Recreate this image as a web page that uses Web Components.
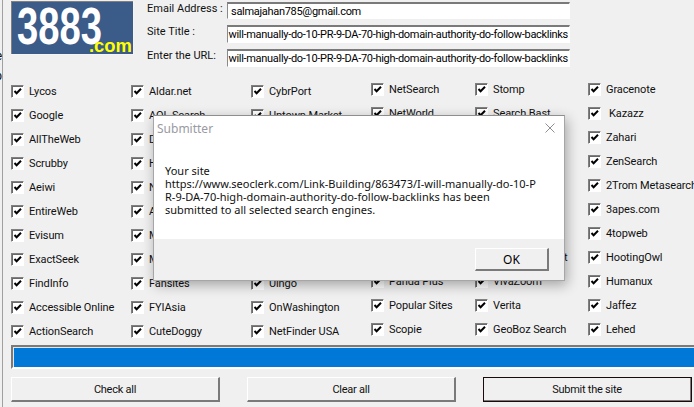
<!DOCTYPE html>
<html>
<head>
<meta charset="utf-8">
<title>Submitter</title>
<style>
html, body {
    margin: 0;
    padding: 0;
    width: 694px;
    height: 407px;
    overflow: hidden;
    background: #f0f0f0;
}
body {
    font: 11px Roboto, "Liberation Sans", Arial, sans-serif;
    color: #000;
}
</style>
</head>
<body>
<submit-app>
    <logo-box slot="logo"></logo-box>
    <field-row slot="fields" label="Email Address :" value="salmajahan785@gmail.com" height="17"></field-row>
    <field-row slot="fields" label="Site Title :" value="will-manually-do-10-PR-9-DA-70-high-domain-authority-do-follow-backlinks" end></field-row>
    <field-row slot="fields" label="Enter the URL:" value="will-manually-do-10-PR-9-DA-70-high-domain-authority-do-follow-backlinks" end></field-row>

    <check-column slot="checks" offset="3">
        <check-item>Lycos</check-item>
        <check-item>Google</check-item>
        <check-item>AllTheWeb</check-item>
        <check-item>Scrubby</check-item>
        <check-item>Aeiwi</check-item>
        <check-item>EntireWeb</check-item>
        <check-item>Evisum</check-item>
        <check-item>ExactSeek</check-item>
        <check-item>FindInfo</check-item>
        <check-item>Accessible Online</check-item>
        <check-item>ActionSearch</check-item>
    </check-column>
    <check-column slot="checks" offset="3">
        <check-item>Aldar.net</check-item>
        <check-item>AOL Search</check-item>
        <check-item>D</check-item>
        <check-item>H</check-item>
        <check-item>N</check-item>
        <check-item>A</check-item>
        <check-item>M</check-item>
        <check-item>M</check-item>
        <check-item>Fansites</check-item>
        <check-item>FYIAsia</check-item>
        <check-item>CuteDoggy</check-item>
    </check-column>
    <check-column slot="checks" offset="3">
        <check-item>CybrPort</check-item>
        <check-item>Uptown Market</check-item>
        <check-item></check-item>
        <check-item></check-item>
        <check-item></check-item>
        <check-item></check-item>
        <check-item></check-item>
        <check-item></check-item>
        <check-item>Uingo</check-item>
        <check-item>OnWashington</check-item>
        <check-item>NetFinder USA</check-item>
    </check-column>
    <check-column slot="checks" offset="1">
        <check-item>NetSearch</check-item>
        <check-item>NetWorld</check-item>
        <check-item></check-item>
        <check-item></check-item>
        <check-item></check-item>
        <check-item></check-item>
        <check-item></check-item>
        <check-item></check-item>
        <check-item>Panda Plus</check-item>
        <check-item>Popular Sites</check-item>
        <check-item>Scopie</check-item>
    </check-column>
    <check-column slot="checks" offset="1">
        <check-item>Stomp</check-item>
        <check-item>Search Bast</check-item>
        <check-item></check-item>
        <check-item></check-item>
        <check-item></check-item>
        <check-item></check-item>
        <check-item></check-item>
        <check-item indent="71">t</check-item>
        <check-item>VivaZoom</check-item>
        <check-item>Verita</check-item>
        <check-item>GeoBoz Search</check-item>
    </check-column>
    <check-column slot="checks" offset="1">
        <check-item>Gracenote</check-item>
        <check-item indent="3">Kazazz</check-item>
        <check-item>Zahari</check-item>
        <check-item>ZenSearch</check-item>
        <check-item>2Trom Metasearch</check-item>
        <check-item>3apes.com</check-item>
        <check-item>4topweb</check-item>
        <check-item>HootingOwl</check-item>
        <check-item>Humanux</check-item>
        <check-item>Jaffez</check-item>
        <check-item>Lehed</check-item>
    </check-column>

    <progress-strip slot="progress"></progress-strip>

    <win-button slot="buttons">Check all</win-button>
    <win-button slot="buttons">Clear all</win-button>
    <win-button slot="buttons" default>Submit the site</win-button>

    <msg-dialog slot="dialog" heading="Submitter">
        Your site<br>
        https://www.seoclerk.com/Link-Building/863473/I-will-manually-do-10-P<br>
        R-9-DA-70-high-domain-authority-do-follow-backlinks has been<br>
        submitted to all selected search engines.
    </msg-dialog>
</submit-app>

<script>
class SubmitApp extends HTMLElement {
    constructor() {
        super();
        this.shadowDOM = this.attachShadow({mode: "open"});
        this.shadowDOM.innerHTML = `
        <style>
        :host {
            display: flex;
            position: relative;
            width: 694px;
            height: 407px;
            overflow: hidden;
        }
        .behind {
            flex: none;
            width: 2px;
            overflow: hidden;
            font-size: 12px;
            line-height: 20px;
            padding-top: 46px;
            direction: rtl;
        }
        .main {
            flex: none;
            width: 692px;
            border-left: 1px solid #a0a0a0;
            box-sizing: border-box;
        }
        header {
            display: flex;
            height: 76px;
            padding: 1px 0 0 8px;
            box-sizing: border-box;
        }
        .fields {
            display: flex;
            flex-direction: column;
            gap: 6px;
            margin: 1px 0 0 13px;
        }
        .checks {
            display: grid;
            grid-template-columns: 120px 120px 120px 104px 113px 1fr;
            margin-left: 8px;
            height: 266px;
        }
        .progress {
            margin: 3px 0 0 8px;
        }
        .buttons {
            display: flex;
            gap: 27px;
            margin: 8px 0 0 8px;
        }
        </style>
        <div class="behind">e<br>p</div>
        <div class="main">
            <header>
                <slot name="logo"></slot>
                <div class="fields"><slot name="fields"></slot></div>
            </header>
            <div class="checks"><slot name="checks"></slot></div>
            <div class="progress"><slot name="progress"></slot></div>
            <div class="buttons"><slot name="buttons"></slot></div>
        </div>
        <slot name="dialog"></slot>`;
    }
}
customElements.define("submit-app", SubmitApp);

class LogoBox extends HTMLElement {
    constructor() {
        super();
        this.shadowDOM = this.attachShadow({mode: "open"});
        this.shadowDOM.innerHTML = `
        <style>
        :host {
            display: block;
            flex: none;
            width: 123px;
            height: 54px;
        }
        svg { display: block; }
        text { font-family: "Liberation Sans", Arial, sans-serif; font-weight: bold; }
        </style>
        <svg width="123" height="54" viewBox="0 0 123 54">
            <rect width="123" height="54" fill="#f4f4f4"/>
            <rect x="0" y="0" width="122" height="53" fill="#808080"/>
            <rect x="1" y="1" width="121" height="52" fill="#3b5b88"/>
            <text x="6" y="43" font-size="51" fill="#fff" textLength="85" lengthAdjust="spacingAndGlyphs">3883</text>
            <text x="78" y="51" font-size="19" fill="#ffff00" textLength="43" lengthAdjust="spacingAndGlyphs">.com</text>
        </svg>`;
    }
}
customElements.define("logo-box", LogoBox);

class FieldRow extends HTMLElement {
    constructor() {
        super();
        this.shadowDOM = this.attachShadow({mode: "open"});
    }

    connectedCallback() {
        const end = this.hasAttribute("end");
        const height = this.getAttribute("height") || 18;
        this.shadowDOM.innerHTML = `
        <style>
        :host {
            display: flex;
            align-items: flex-start;
            height: ${height}px;
            font-size: 11px;
        }
        label {
            width: 80px;
            flex: none;
            line-height: 14px;
            color: #111;
            white-space: nowrap;
        }
        .input {
            display: flex;
            justify-content: ${end ? "flex-end" : "flex-start"};
            align-items: center;
            width: 343px;
            height: ${height}px;
            box-sizing: border-box;
            padding: 0 1px 0 3px;
            overflow: hidden;
            white-space: nowrap;
            background: #fff;
            border-top: 2px solid #7a7a7a;
            border-left: 1px solid #8a8a8a;
            border-right: 1px solid #fff;
            border-bottom: 1px solid #fff;
            color: #000;
            letter-spacing: -0.3px;
        }
        span { flex: none; }
        </style>
        <label>${this.getAttribute("label")}</label>
        <div class="input"><span>${this.getAttribute("value")}</span></div>`;
    }
}
customElements.define("field-row", FieldRow);

class CheckColumn extends HTMLElement {
    constructor() {
        super();
        this.shadowDOM = this.attachShadow({mode: "open"});
    }

    connectedCallback() {
        this.shadowDOM.innerHTML = `
        <style>
        :host {
            display: flex;
            flex-direction: column;
            margin-top: ${this.getAttribute("offset") || 0}px;
        }
        </style>
        <slot></slot>`;
    }
}
customElements.define("check-column", CheckColumn);

class CheckItem extends HTMLElement {
    constructor() {
        super();
        this.shadowDOM = this.attachShadow({mode: "open"});
    }

    connectedCallback() {
        this.shadowDOM.innerHTML = `
        <style>
        :host {
            display: flex;
            align-items: center;
            height: 24px;
            font-size: 11px;
            letter-spacing: -0.1px;
            white-space: nowrap;
            color: #111;
        }
        .box {
            flex: none;
            width: 13px;
            height: 13px;
            box-sizing: border-box;
            background: #fff;
            border-top: 1px solid #808080;
            border-left: 1px solid #808080;
            border-right: 1px solid #fff;
            border-bottom: 1px solid #fff;
            box-shadow: inset 1px 1px 0 #696969;
        }
        svg { display: block; }
        .text { margin-left: ${5 + Number(this.getAttribute("indent") || 0)}px; }
        </style>
        <div class="box">
            <svg width="11" height="11" viewBox="0 0 11 11"><path d="M2.5 5 L4.6 7.2 L9 2.8" fill="none" stroke="#000" stroke-width="2"/></svg>
        </div>
        <span class="text"><slot></slot></span>`;
    }
}
customElements.define("check-item", CheckItem);

class ProgressStrip extends HTMLElement {
    constructor() {
        super();
        this.shadowDOM = this.attachShadow({mode: "open"});
        this.shadowDOM.innerHTML = `
        <style>
        :host {
            display: block;
            height: 24px;
            box-sizing: border-box;
            border-top: 2px solid #7a7a7a;
            border-left: 2px solid #7a7a7a;
            border-bottom: 2px solid #fff;
            background: #e6e6e6;
            padding: 1px 0 0 1px;
        }
        div { height: 19px; background: #0078d7; }
        </style>
        <div></div>`;
    }
}
customElements.define("progress-strip", ProgressStrip);

class WinButton extends HTMLElement {
    constructor() {
        super();
        this.shadowDOM = this.attachShadow({mode: "open"});
        const isDefault = this.hasAttribute("default");
        this.shadowDOM.innerHTML = `
        <style>
        :host {
            display: block;
            flex: none;
            width: 209px;
            height: 25px;
            font-size: 11px;
            letter-spacing: -0.25px;
            color: #111;
        }
        button {
            display: block;
            width: 100%;
            height: 100%;
            padding: 0;
            font: inherit;
            letter-spacing: inherit;
            color: inherit;
            background: #f0f0f0;
            box-sizing: border-box;
            border-top: 1px solid #fff;
            border-left: 1px solid #fff;
            border-right: 2px solid #7a7a7a;
            border-bottom: 2px solid #7a7a7a;
            ${isDefault ? "outline: 1px solid #1a0a0a; outline-offset: -1px;" : ""}
        }
        </style>
        <button><slot></slot></button>`;
    }
}
customElements.define("win-button", WinButton);

class MsgDialog extends HTMLElement {
    constructor() {
        super();
        this.shadowDOM = this.attachShadow({mode: "open"});
    }

    connectedCallback() {
        this.shadowDOM.innerHTML = `
        <style>
        :host {
            position: absolute;
            left: 153px;
            top: 115px;
            width: 412px;
            height: 166px;
            display: flex;
            flex-direction: column;
            box-sizing: border-box;
            border: 1px solid #a6a6a6;
            border-top-color: #8e8e8e;
            background: #fff;
            box-shadow: 2px 4px 12px rgba(0, 0, 0, 0.32);
            font: 11px "Noto Sans", "Open Sans", sans-serif;
            color: #111;
        }
        .title {
            display: flex;
            align-items: center;
            justify-content: space-between;
            height: 24px;
            padding: 0 9px 0 3px;
            font-size: 12px;
            color: #9a9aa2;
        }
        svg { display: block; }
        .text {
            flex: 1;
            padding: 24px 0 0 11px;
            line-height: 13px;
            white-space: nowrap;
        }
        .foot {
            display: flex;
            justify-content: flex-end;
            height: 41px;
            box-sizing: border-box;
            padding: 9px 15px 0 0;
            background: #f0f0f0;
        }
        button {
            width: 74px;
            height: 23px;
            padding: 0;
            font: inherit;
            font-size: 12px;
            color: #000;
            background: #f0f0f0;
            box-sizing: border-box;
            border-top: 1px solid #fff;
            border-left: 1px solid #fff;
            border-right: 2px solid #7a7a7a;
            border-bottom: 2px solid #7a7a7a;
        }
        </style>
        <div class="title">
            <span>${this.getAttribute("heading")}</span>
            <svg width="10" height="10" viewBox="0 0 10 10"><path d="M0.5 0.5 L9.5 9.5 M9.5 0.5 L0.5 9.5" stroke="#8f8f8f" stroke-width="1" fill="none"/></svg>
        </div>
        <div class="text"><slot></slot></div>
        <div class="foot"><button>OK</button></div>`;
    }
}
customElements.define("msg-dialog", MsgDialog);
</script>
</body>
</html>
